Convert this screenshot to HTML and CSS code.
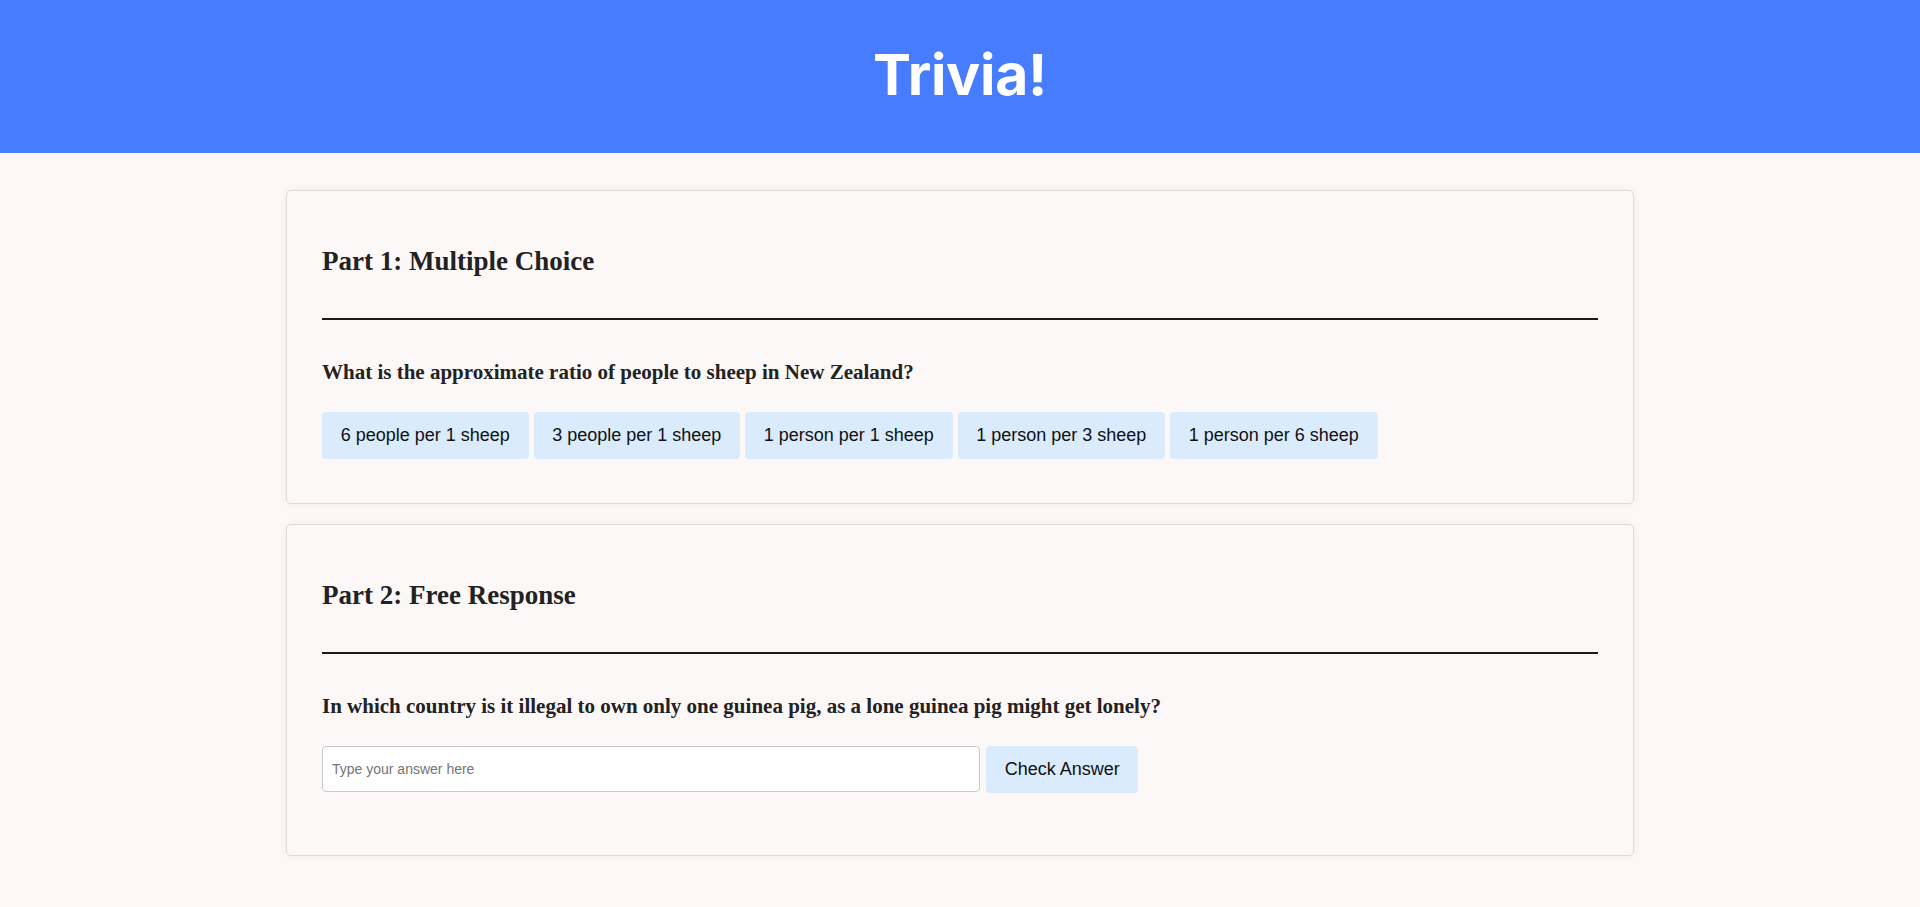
FILE: index.html
```html
<!DOCTYPE html>
<html lang="en">
<head>
<meta charset="utf-8">
<title>Trivia!</title>
<link rel="stylesheet" href="styles.css">
</head>
<body>
<header class="header">
  <h1 class="title">Trivia!</h1>
</header>
<main class="main">
  <section class="card">
    <h2 class="part-title">Part 1: Multiple Choice</h2>
    <hr class="rule">
    <h3 class="question">What is the approximate ratio of people to sheep in New Zealand?</h3>
    <div class="choices">
      <button class="btn">6 people per 1 sheep</button>
      <button class="btn">3 people per 1 sheep</button>
      <button class="btn">1 person per 1 sheep</button>
      <button class="btn">1 person per 3 sheep</button>
      <button class="btn">1 person per 6 sheep</button>
    </div>
  </section>
  <section class="card card-free">
    <h2 class="part-title">Part 2: Free Response</h2>
    <hr class="rule">
    <h3 class="question">In which country is it illegal to own only one guinea pig, as a lone guinea pig might get lonely?</h3>
    <div class="answer-row">
      <input class="answer-input" type="text" placeholder="Type your answer here">
      <button class="btn">Check Answer</button>
    </div>
    <p class="feedback"></p>
  </section>
</main>
</body>
</html>
```

FILE: styles.css
```css
html, body {
  margin: 0;
  padding: 0;
}
body {
  background: #fdf7f7;
  font-family: "Liberation Serif", "Times New Roman", serif;
  color: #212121;
  min-height: 907px;
}
.header {
  background: #477cff;
  height: 153px;
  display: flex;
  align-items: center;
  justify-content: center;
}
.title {
  margin: 0;
  font-family: Inter, "Open Sans", sans-serif;
  font-weight: 700;
  font-size: 57px;
  line-height: 70px;
  color: #ffffff;
  letter-spacing: -0.3px;
  transform: translateY(-2px);
}
.main {
  padding: 37px 0 51px;
  display: flex;
  flex-direction: column;
  align-items: center;
  gap: 20px;
}
.card {
  box-sizing: border-box;
  width: 1348px;
  background: #fdf8f8;
  border: 1px solid #dedada;
  border-radius: 5px;
  box-shadow: 0 0 8px rgba(0, 0, 0, 0.06);
  padding: 54px 35px 44px;
}
.part-title {
  margin: 0;
  font-size: 27px;
  line-height: 32px;
  font-weight: 700;
  color: #222;
}
.rule {
  margin: 41px 0 0;
  border: 0;
  height: 2px;
  background: #1a1a1a;
}
.question {
  margin: 40px 0 0;
  font-size: 21px;
  line-height: 24px;
  font-weight: 700;
  color: #222;
}
.choices {
  margin-top: 28px;
  display: flex;
  gap: 5px;
}
.btn {
  font-family: "Liberation Sans", Arial, sans-serif;
  font-size: 18px;
  line-height: 21px;
  padding: 13px 18.7px;
  color: #111;
  background: #d9ebfd;
  border: 0;
  border-radius: 4px;
}
.answer-row {
  margin-top: 28px;
  display: flex;
  gap: 6px;
}
.answer-input {
  box-sizing: border-box;
  width: 658px;
  height: 46px;
  padding: 0 9px;
  font-family: "Liberation Sans", Arial, sans-serif;
  font-size: 14px;
  background: #fff;
  border: 1px solid #c9c9c9;
  border-radius: 4px;
}
.answer-input::placeholder {
  color: #757575;
}
.feedback {
  margin: 0;
  height: 18px;
}
```
